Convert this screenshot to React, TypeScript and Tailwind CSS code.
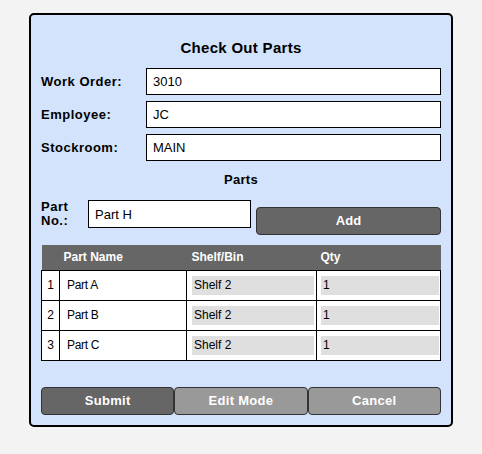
// Check Out Parts form panel
const fields = [
  { label: "Work Order:", value: "3010" },
  { label: "Employee:", value: "JC" },
  { label: "Stockroom:", value: "MAIN" },
]

const parts = [
  { no: 1, name: "Part A", shelf: "Shelf 2", qty: "1" },
  { no: 2, name: "Part B", shelf: "Shelf 2", qty: "1" },
  { no: 3, name: "Part C", shelf: "Shelf 2", qty: "1" },
]

export default function App() {
  return (
    <div className="min-h-screen bg-[#f3f3f3] pt-[13px] pl-[29px] font-['Liberation_Sans',Arial,sans-serif] text-black">
      <div className="w-[424px] h-[414px] border-2 border-black rounded-[5px] bg-[#d2e3fb] px-[10px] pt-[22px] pb-[10px] flex flex-col">
        {/* Title */}
        <h1 className="h-[22px] leading-[22px] text-center text-[15px] font-bold tracking-[0.3px]">Check Out Parts</h1>

        {/* Header fields */}
        <div className="mt-[9px] flex flex-col gap-[6px]">
          {fields.map((f) => (
            <div key={f.label} className="flex items-center">
              <label className="w-[105px] text-[13px] font-bold tracking-[0.5px]">{f.label}</label>
              <input
                defaultValue={f.value}
                className="w-[295px] h-[27px] border border-black bg-white pl-[6px] text-[13px] outline-none"
              />
            </div>
          ))}
        </div>

        {/* Parts section */}
        <div className="mt-[11px] h-[16px] leading-[16px] text-center text-[13px] font-bold tracking-[0.3px]">Parts</div>

        <div className="mt-[12px] flex items-start">
          <label className="w-[47px] text-[13px] font-bold leading-[14px] tracking-[0.5px]">
            Part
            <br />
            No.:
          </label>
          <input
            defaultValue="Part H"
            className="w-[163px] h-[28px] border border-black bg-white pl-[6px] text-[13px] outline-none"
          />
          <button className="ml-[5px] mt-[7px] w-[185px] h-[28px] rounded-[4px] border border-[#333] bg-[#666] text-white text-[13px] font-bold">
            Add
          </button>
        </div>

        {/* Parts table */}
        <table className="mt-[10px] w-[400px] table-fixed border-collapse text-[12px]">
          <colgroup>
            <col className="w-[18px]" />
            <col className="w-[127px]" />
            <col className="w-[130px]" />
            <col />
          </colgroup>
          <thead>
            <tr className="h-[25px] bg-[#666] text-white font-bold text-left">
              <th />
              <th className="pl-[4px] font-bold">Part Name</th>
              <th className="pl-[5px] font-bold">Shelf/Bin</th>
              <th className="pl-[4px] font-bold">Qty</th>
            </tr>
          </thead>
          <tbody className="bg-white">
            {parts.map((p) => (
              <tr key={p.no} className="h-[30px]">
                <td className="border border-black text-center">{p.no}</td>
                <td className="border border-black pl-[7px] tracking-[-0.3px]">{p.name}</td>
                <td className="border border-black pl-[5px] pr-[2px]">
                  <div className="h-[19px] leading-[19px] bg-[#dfdfdf] pl-[2px]">{p.shelf}</div>
                </td>
                <td className="border border-black pl-[4px] pr-[1px]">
                  <div className="h-[19px] leading-[19px] bg-[#dfdfdf] pl-[2px]">{p.qty}</div>
                </td>
              </tr>
            ))}
          </tbody>
        </table>

        {/* Action buttons */}
        <div className="mt-auto flex w-[400px]">
          <button className="flex-1 h-[28px] rounded-[4px] border border-[#333] bg-[#666] text-white text-[13px] font-bold tracking-[0.3px]">
            Submit
          </button>
          <button className="flex-1 h-[28px] rounded-[4px] border border-[#333] bg-[#999] text-white text-[13px] font-bold tracking-[0.3px]">
            Edit Mode
          </button>
          <button className="flex-1 h-[28px] rounded-[4px] border border-[#333] bg-[#999] text-white text-[13px] font-bold tracking-[0.3px]">
            Cancel
          </button>
        </div>
      </div>
    </div>
  )
}
